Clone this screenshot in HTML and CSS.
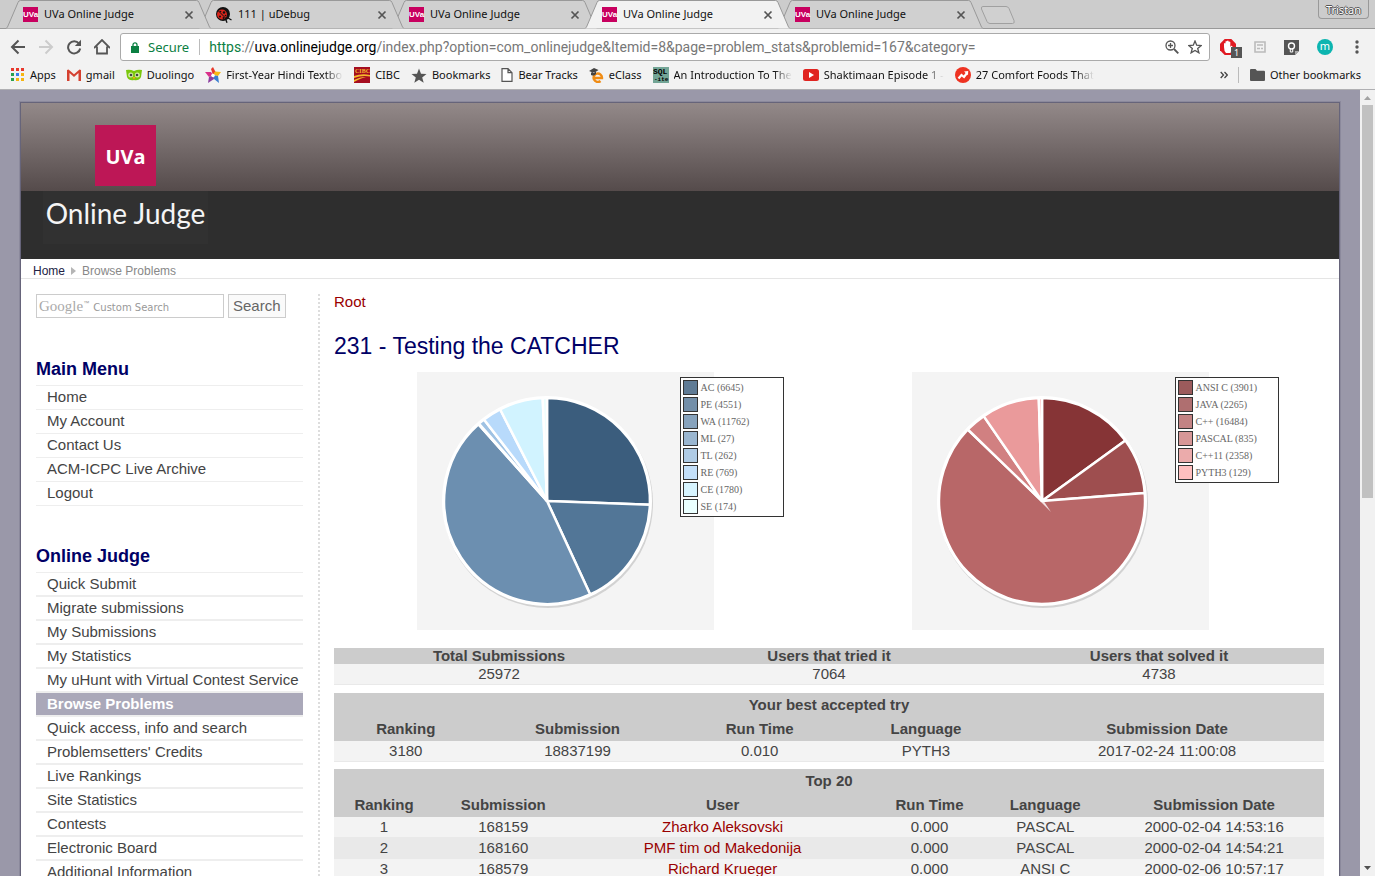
FILE: index.html
```html
<!DOCTYPE html>
<html lang="en">
<head>
<meta charset="utf-8">
<title>UVa Online Judge</title>
<link rel="stylesheet" href="styles.css">
</head>
<body>
<svg class="defs" aria-hidden="true">
  <symbol id="close" viewBox="0 0 10 10"><path d="M1.500 1.500l7 7M8.500 1.500l-7 7" stroke="#555" stroke-width="1.700" fill="none"/></symbol>
  <symbol id="shape" viewBox="0 0 205 29" preserveAspectRatio="none"><path d="M0 28.500L1.500 27L12 2.500Q12.600 .5 14.500 .5H190.500Q192.400 .5 193 2.500L203.500 27L205 28.500" stroke="#999" /></symbol>
</svg>

<header class="chrome">
  <div class="strip">
    <ul class="tabs">
      <li class="tab t1"><svg class="shape"><use href="#shape"/></svg><span class="fav">UVa</span><span class="name">UVa Online Judge</span><button class="x" aria-label="Close tab"><svg width="10" height="10"><use href="#close"/></svg></button></li>
      <li class="tab t2"><svg class="shape"><use href="#shape"/></svg><svg class="bug" width="16" height="16" viewBox="0 0 16 16"><circle cx="7" cy="7" r="7" fill="#111"/><circle cx="6" cy="7.500" r="5" fill="#d9261c"/><path d="M2.500 4l8 8" stroke="#111"/><path d="M12 11l3.500 2M10 13l1 2.800" stroke="#111" stroke-width="1.300"/><circle cx="8" cy="5.500" r="1.200" fill="#111"/><circle cx="4" cy="9.500" r="1" fill="#111"/><circle cx="7.500" cy="11" r=".9" fill="#111"/><circle cx="9.500" cy="8.500" r=".8" fill="#111"/><circle cx="4.500" cy="4.500" r=".8" fill="#111"/></svg><span class="name">111 | uDebug</span><button class="x" aria-label="Close tab"><svg width="10" height="10"><use href="#close"/></svg></button></li>
      <li class="tab t3"><svg class="shape"><use href="#shape"/></svg><span class="fav">UVa</span><span class="name">UVa Online Judge</span><button class="x" aria-label="Close tab"><svg width="10" height="10"><use href="#close"/></svg></button></li>
      <li class="tab active"><svg class="shape"><use href="#shape"/></svg><span class="fav">UVa</span><span class="name">UVa Online Judge</span><button class="x" aria-label="Close tab"><svg width="10" height="10"><use href="#close"/></svg></button></li>
      <li class="tab t5"><svg class="shape"><use href="#shape"/></svg><span class="fav">UVa</span><span class="name">UVa Online Judge</span><button class="x" aria-label="Close tab"><svg width="10" height="10"><use href="#close"/></svg></button></li>
    </ul>
    <button class="newtab" aria-label="New tab"><svg width="36" height="18" viewBox="0 0 36 18"><path d="M3 .5H26Q28 .5 29 2.500L34 14.500Q35 17.500 32.500 17.500H10Q8 17.500 7 15.500L1.500 3Q.8 .5 3 .5Z" fill="#d0d0d0" stroke="#a0a0a0"/></svg></button>
    <button class="user">Tristan</button>
  </div>

  <div class="toolbar">
    <div class="nav">
      <button aria-label="Back"><svg width="16" height="16" viewBox="0 0 16 16"><path d="M15 8H2M8.500 1.500L2 8l6.500 6.500" class="ln"/></svg></button>
      <button aria-label="Forward"><svg width="16" height="16" viewBox="0 0 16 16"><path d="M1 8H14M7.500 1.500L14 8l-6.500 6.500" class="ln off"/></svg></button>
      <button aria-label="Reload"><svg width="16" height="16" viewBox="0 0 16 16"><path d="M13 4.500A6.100 6.100 0 1 0 14.200 9.500" class="ln"/><path d="M15 .8V7H8.800Z" fill="#555"/></svg></button>
      <button aria-label="Home page"><svg width="16" height="16" viewBox="0 0 16 16"><path d="M0 9L8 1l8 8M3 7.500V14.500H13V7.500" fill="none" stroke="#555" stroke-width="1.800"/></svg></button>
    </div>
    <div class="omnibox">
      <svg width="8" height="11" viewBox="0 0 8 11"><path d="M0 4H8V11H0Z" fill="#0b8043"/><path d="M2 4.500V2.800a2 2 0 0 1 4 0V4.500" stroke="#0b8043" stroke-width="1.300" fill="none"/></svg>
      <span class="secure">Secure</span>
      <span class="url"><span class="g">https</span>://<b>uva.onlinejudge.org</b>/index.php?option=com_onlinejudge&amp;Itemid=8&amp;page=problem_stats&amp;problemid=167&amp;category=</span>
      <svg width="14" height="14" viewBox="0 0 14 14"><circle cx="5.500" cy="5.500" r="4.500" class="thin"/><path d="M9 9l4.300 4.300" stroke="#555" stroke-width="1.800"/><path d="M3 5.500H8M5.500 3V8" class="thin"/></svg>
      <svg width="14" height="14" viewBox="0 0 14 14"><path d="M7 1l1.700 4.200 4.500.3-3.500 2.900 1.200 4.400L7 10.400 3.100 12.800 4.300 8.400.8 5.500l4.500-.3Z" class="thin"/></svg>
    </div>
    <div class="ext">
      <span class="stop"><svg width="16" height="16" viewBox="0 0 16 16"><path d="M4.700 0H11.300L16 4.700V11.300L11.300 16H4.700L0 11.300V4.700Z" fill="#e01a22"/><path d="M4 8V4.500Q5 3.500 5.500 4.500V2.500Q6.500 1.500 7 2.500V2Q8 1 8.700 2V3Q9.600 2 10.300 3V8Q11.500 6 12.500 7.300L10.500 14H6Q4 12 4 8Z" fill="#fff"/></svg><i>1</i></span>
      <svg width="12" height="12" viewBox="0 0 12 12"><path d="M1 1H11V11H1Z M3 4H9 M3 7.500H6M7 7.500H9" stroke="#bbb" stroke-width="1.600" fill="none"/></svg>
      <svg width="15" height="15" viewBox="0 0 15 15"><path d="M0 0H15V11L11 15H0Z" fill="#555"/><path d="M11 15V11H15Z" fill="#aaa"/><circle cx="7.500" cy="6" r="3" fill="none" stroke="#fff" stroke-width="1.400"/><path d="M6.300 8.500V12H8.700V8.500" fill="none" stroke="#fff"/></svg>
      <span class="m">m</span>
      <svg width="4" height="14" viewBox="0 0 4 14" fill="#555"><circle cx="2" cy="2" r="1.700"/><circle cx="2" cy="7" r="1.700"/><circle cx="2" cy="12" r="1.700"/></svg>
    </div>
  </div>

  <nav class="marks">
    <a href="#"><svg width="14" height="14" viewBox="0 0 14 14"><path d="M0 0h3v3H0zM5 0h3v3H5zM10 0h3v3h-3z" fill="#e8382c"/><path d="M0 5h3v3H0z" fill="#2aa14f"/><path d="M5 5h3v3H5z" fill="#3b7ded"/><path d="M10 5h3v3h-3zM5 10h3v3H5zM10 10h3v3h-3z" fill="#f6b511"/><path d="M0 10h3v3H0z" fill="#2aa14f"/></svg><span>Apps</span></a>
    <a href="#"><svg width="14" height="12" viewBox="0 0 14 12"><path d="M0 1H14V12H0Z" fill="#f4f0ee"/><path d="M0 1V12H2.500V4L7 8l4.500-4V12H14V1L12.500 .5 7 5.200 1.500.5Z" fill="#d5402f"/></svg><span>gmail</span></a>
    <a href="#"><svg width="16" height="12" viewBox="0 0 16 12"><path d="M0 1Q4 0 8 2 12 0 16 1L15 8Q13 12 8 11 3 12 1 8Z" fill="#7ac70c"/><circle cx="4.700" cy="6" r="2.500" fill="#d5efa5"/><circle cx="11.300" cy="6" r="2.500" fill="#d5efa5"/><circle cx="5" cy="6" r="1.300" fill="#444"/><circle cx="11" cy="6" r="1.300" fill="#444"/><path d="M6.500 8H9.500L8 10.500Z" fill="#f9a51a"/></svg><span>Duolingo</span></a>
    <a href="#"><svg width="16" height="16" viewBox="0 0 16 16"><path d="M8 8L6 2 8 0 10.500 5Z" fill="#e8392b"/><path d="M8 8L10 4.500 16 5 13 9Z" fill="#f9b915"/><path d="M8 8L13 9 14 16 9 12Z" fill="#3c7fd0"/><path d="M8 8L9 12 3 16 4 10Z" fill="#8b3fa0"/><path d="M8 8L4 10 0 5 6 5Z" fill="#d9308a"/><circle cx="8" cy="8.500" r="1.800" fill="#fff"/></svg><span class="long">First-Year Hindi Textbo</span></a>
    <a href="#"><svg width="16" height="16" viewBox="0 0 16 16"><path d="M0 0H16V16H0Z" fill="#a50d20"/><path d="M0 9Q8 6 16 8V9.500Q8 8 0 11ZM0 13Q7 9.500 12 10Q7 11 0 15Z" fill="#f6b92b"/><text x="1" y="6" class="cibc">CIBC</text></svg><span>CIBC</span></a>
    <a href="#"><svg width="16" height="15" viewBox="0 0 16 15"><path d="M8 .5l2 5.200 5.500.3-4.300 3.500 1.500 5.300L8 11.800 3.300 14.800 4.800 9.500.5 6l5.500-.3Z" fill="#555"/></svg><span>Bookmarks</span></a>
    <a href="#"><svg width="12" height="14" viewBox="0 0 12 14"><path d="M1 .7H7L11 4.700V13.300H1ZM7 .7V4.700H11" fill="#fff" stroke="#555" stroke-width="1.200"/></svg><span>Bear Tracks</span></a>
    <a href="#"><svg width="15" height="15" viewBox="0 0 15 15"><path d="M5 10H13A4.200 4.200 0 1 0 11.500 13" stroke="#f08c14" stroke-width="2.400" fill="none"/><path d="M0 3L5 0 9.500 2 5 5ZM2 4.500V7Q5 8.500 7 6V4" fill="#444"/></svg><span>eClass</span></a>
    <a href="#"><svg width="16" height="16" viewBox="0 0 16 16"><path d="M0 0H16V16H0Z" fill="#73a596"/><text x="0" y="7" class="sql">SQL</text><text x="1" y="14" class="sql ite">-ite</text></svg><span class="long">An Introduction To The</span></a>
    <a href="#"><svg width="16" height="12" viewBox="0 0 16 12"><rect width="16" height="12" rx="2.500" fill="#e02420"/><path d="M6 3L11 6 6 9Z" fill="#fff"/></svg><span class="long">Shaktimaan Episode 1 -</span></a>
    <a href="#"><svg width="16" height="16" viewBox="0 0 16 16"><circle cx="8" cy="8" r="8" fill="#ee3322"/><path d="M3.500 11.500L6.500 8l2.500 2L12 6" stroke="#fff" stroke-width="2.200" fill="none"/><path d="M9 4.500L13.200 4 13 8.300Z" fill="#fff"/></svg><span class="long">27 Comfort Foods That</span></a>
    <div class="other">
      <button aria-label="More bookmarks"><svg width="8" height="8" viewBox="0 0 8 8"><path d="M.7 1L3.500 4 .7 7M4.500 1L7.300 4 4.500 7" stroke="#444" stroke-width="1.300" fill="none"/></svg></button>
      <a href="#"><svg width="15" height="12" viewBox="0 0 15 12"><path d="M1 0H5.500L7 1.800H14Q15 1.800 15 3V11Q15 12 14 12H1Q0 12 0 11V1Q0 0 1 0Z" fill="#555"/></svg><span>Other bookmarks</span></a>
    </div>
  </nav>
</header>

<div class="view">
  <div class="canvas">
    <div class="page">
      <div class="banner">
        <div class="brand"><span class="uva">UVa</span><span class="oj">Online Judge</span></div>
      </div>
      <nav class="crumbs"><a href="#">Home</a><svg width="5" height="8" viewBox="0 0 5 8"><path d="M0 0L5 4 0 8Z" fill="#b5b5b5"/></svg><span>Browse Problems</span></nav>
      <div class="cols">
        <aside class="side">
          <form class="search">
            <label class="field"><span class="hint"><b>Google</b><sup>™</sup> <em>Custom Search</em></span><input type="text" aria-label="Google Custom Search"></label>
            <button type="button">Search</button>
          </form>
          <h3>Main Menu</h3>
          <ul class="menu">
            <li><a href="#">Home</a></li><li><a href="#">My Account</a></li><li><a href="#">Contact Us</a></li><li><a href="#">ACM-ICPC Live Archive</a></li><li><a href="#">Logout</a></li>
          </ul>
          <h3>Online Judge</h3>
          <ul class="menu double">
            <li><a href="#">Quick Submit</a></li><li><a href="#">Migrate submissions</a></li><li><a href="#">My Submissions</a></li><li><a href="#">My Statistics</a></li><li><a href="#">My uHunt with Virtual Contest Service</a></li><li class="on"><a href="#">Browse Problems</a></li><li><a href="#">Quick access, info and search</a></li><li><a href="#">Problemsetters' Credits</a></li><li><a href="#">Live Rankings</a></li><li><a href="#">Site Statistics</a></li><li><a href="#">Contests</a></li><li><a href="#">Electronic Board</a></li><li><a href="#">Additional Information</a></li>
          </ul>
        </aside>
        <div class="dots"></div>
        <main class="main">
          <a class="red" href="#">Root</a>
          <h1>231 - Testing the CATCHER</h1>
          <div class="charts">
            <figure>
              <svg class="pie" width="297" height="258" viewBox="0 0 297 258">
                <circle cx="131" cy="131" r="105" fill="#d2d2d2"/><circle cx="130" cy="129" r="105" fill="#fff"/>
                <g stroke="#fff" stroke-width="2.500" stroke-linejoin="bevel">
                  <path fill="#3b5d7d" d="M130 129L130 26A103 103 0 0 1 232.900 132.800Z"/>
                  <path fill="#527697" d="M130 129L232.900 132.800A103 103 0 0 1 173.200 222.500Z"/>
                  <path fill="#6c8fb0" d="M130 129L173.200 222.500A103 103 0 0 1 61.400 52.200Z"/>
                  <path fill="#84a8c9" d="M130 129L61.400 52.200A103 103 0 0 1 61.900 51.700Z"/>
                  <path fill="#9fc2e3" d="M130 129L61.900 51.700A103 103 0 0 1 67 47.500Z"/>
                  <path fill="#b8dafb" d="M130 129L67 47.500A103 103 0 0 1 83.100 37.300Z"/>
                  <path fill="#d1f3ff" d="M130 129L83.100 37.300A103 103 0 0 1 125.700 26.100Z"/>
                  <path fill="#ebffff" d="M130 129L125.700 26.100A103 103 0 0 1 130 26Z"/>
                </g>
              </svg>
              <figcaption>
                <div><i class="b1"></i>AC (6645)</div><div><i class="b2"></i>PE (4551)</div><div><i class="b3"></i>WA (11762)</div><div><i class="b4"></i>ML (27)</div><div><i class="b5"></i>TL (262)</div><div><i class="b6"></i>RE (769)</div><div><i class="b7"></i>CE (1780)</div><div><i class="b8"></i>SE (174)</div>
              </figcaption>
            </figure>
            <figure>
              <svg class="pie" width="297" height="258" viewBox="0 0 297 258">
                <circle cx="131" cy="131" r="105" fill="#d2d2d2"/><circle cx="130" cy="129" r="105" fill="#fff"/>
                <g stroke="#fff" stroke-width="2.500" stroke-linejoin="bevel">
                  <path fill="#863436" d="M130 129L130 26A103 103 0 0 1 213.400 68.600Z"/>
                  <path fill="#9e4e4f" d="M130 129L213.400 68.600A103 103 0 0 1 232.700 120.900Z"/>
                  <path fill="#b86768" d="M130 129L232.700 120.900A103 103 0 1 1 55.800 57.500Z"/>
                  <path fill="#d18081" d="M130 129L55.800 57.500A103 103 0 0 1 71.700 44.100Z"/>
                  <path fill="#ea9a9b" d="M130 129L71.700 44.100A103 103 0 0 1 126.800 26.100Z"/>
                  <path fill="#ffb4b4" d="M130 129L126.800 26.100A103 103 0 0 1 130 26Z"/>
                </g>
                <path d="M129 130L131 128 139 140Z" fill="#fff" opacity=".8"/>
              </svg>
              <figcaption>
                <div><i class="r1"></i>ANSI C (3901)</div><div><i class="r2"></i>JAVA (2265)</div><div><i class="r3"></i>C++ (16484)</div><div><i class="r4"></i>PASCAL (835)</div><div><i class="r5"></i>C++11 (2358)</div><div><i class="r6"></i>PYTH3 (129)</div>
              </figcaption>
            </figure>
          </div>
          <table class="totals">
            <thead><tr><th>Total Submissions</th><th>Users that tried it</th><th>Users that solved it</th></tr></thead>
            <tbody><tr><td>25972</td><td>7064</td><td>4738</td></tr></tbody>
          </table>
          <table class="best">
            <colgroup><col class="w144"><col class="w200"><col class="w164"><col class="w168"><col></colgroup>
            <thead><tr><th colspan="5">Your best accepted try</th></tr>
            <tr><th>Ranking</th><th>Submission</th><th>Run Time</th><th>Language</th><th>Submission Date</th></tr></thead>
            <tbody><tr><td>3180</td><td>18837199</td><td>0.010</td><td>PYTH3</td><td>2017-02-24 11:00:08</td></tr></tbody>
          </table>
          <table class="top">
            <colgroup><col class="w100"><col class="w139"><col class="w300"><col class="w114"><col class="w117"><col></colgroup>
            <thead><tr><th colspan="6">Top 20</th></tr>
            <tr><th>Ranking</th><th>Submission</th><th>User</th><th>Run Time</th><th>Language</th><th>Submission Date</th></tr></thead>
            <tbody>
              <tr><td>1</td><td>168159</td><td><a class="red" href="#">Zharko Aleksovski</a></td><td>0.000</td><td>PASCAL</td><td>2000-02-04 14:53:16</td></tr>
              <tr><td>2</td><td>168160</td><td><a class="red" href="#">PMF tim od Makedonija</a></td><td>0.000</td><td>PASCAL</td><td>2000-02-04 14:54:21</td></tr>
              <tr><td>3</td><td>168579</td><td><a class="red" href="#">Richard Krueger</a></td><td>0.000</td><td>ANSI C</td><td>2000-02-06 10:57:17</td></tr>
            </tbody>
          </table>
        </main>
      </div>
    </div>
  </div>
  <div class="scroll"><svg width="7" height="4" viewBox="0 0 7 4"><path d="M0 4L3.500 0 7 4Z" fill="#a3a3a3"/></svg><div class="rail"><div class="thumb"></div></div><svg width="7" height="4" viewBox="0 0 7 4"><path d="M0 0L3.500 4 7 0Z" fill="#505050"/></svg></div>
</div>
</body>
</html>
```
FILE: styles.css
```css
* { box-sizing: border-box; }
body { margin: 0; height: 100vh; overflow: hidden; display: flex; flex-direction: column; font: 15px/18px "Liberation Sans", Arial, sans-serif; color: #444; background: #fff; }
ul { list-style: none; margin: 0; padding: 0; }
a { text-decoration: none; color: inherit; }
button { border: 0; padding: 0; background: none; font: inherit; color: inherit; }
svg { display: block; flex: none; }
.defs { position: absolute; width: 0; height: 0; }

/* browser frame */
.chrome { flex: none; font: 11px/16px "Noto Sans", sans-serif; color: #111; background: #f2f2f2; border-bottom: 1px solid #b0b0b3; }
.strip { display: flex; height: 29px; background: #ccc; padding-left: 6px; box-shadow: inset 0 -1px #999; }
.tabs { display: flex; min-width: 0; }
.tab { position: relative; display: flex; align-items: center; flex: 0 1 205px; width: 205px; padding: 0 17px; gap: 6px; }
.tab + .tab { margin-left: -12px; }
.tab > * { position: relative; }
.tab .shape { position: absolute; left: 0; top: 0; width: 100%; height: 29px; fill: #d0d0d0; }
.tab.active .shape { fill: #f2f2f2; }
.t1 { z-index: 4; } .t2 { z-index: 3; } .t3 { z-index: 2; } .active { z-index: 5; } .t5 { z-index: 1; }
.fav { width: 15px; height: 15px; background: #c8005f; color: #fff; font: bold 8px/15px "Liberation Sans", sans-serif; text-align: center; }
.name { flex: 1; padding-bottom: 2px; }
.newtab { margin: 0 0 0 -3px; }
.user { margin: 0 6px 0 auto; width: 51px; height: 19px; border: 1px solid #999; border-top: 0; border-radius: 0 0 4px 4px; color: #fff; text-shadow: 1px 0 #555, -1px 0 #555, 0 1px #555, 0 -1px #555; padding-top: 2px; }
.toolbar { display: flex; align-items: center; gap: 10px; height: 36px; padding: 0 16px 0 10px; }
.nav { display: flex; gap: 12px; }
.ln { fill: none; stroke: #555; stroke-width: 2; }
.off { stroke: #ccc; }
.thin { fill: none; stroke: #555; stroke-width: 1.3; }
.omnibox { flex: 1; min-width: 0; display: flex; align-items: center; gap: 9px; height: 28px; padding: 0 7px 0 10px; background: #fff; border: 1px solid #aaa; border-radius: 3px; font-size: 13px; line-height: 20px; }
.secure { color: #0b8043; border-right: 1px solid #bbb; padding-right: 10px; line-height: 16px; }
.url { flex: 1; color: #777; white-space: nowrap; overflow: hidden; font-family: Roboto, sans-serif; font-size: 14px; }
.url b { font-weight: normal; color: #000; }
.url .g { color: #0b8043; }
.ext { display: flex; align-items: center; gap: 18px; }
.stop { position: relative; }
.stop i { position: absolute; left: 11px; top: 8px; width: 11px; height: 11px; background: #555; color: #fff; font: 9px/11px "Noto Sans", sans-serif; text-align: center; }
.m { width: 16px; height: 16px; border-radius: 8px; background: #0cb5b0; color: #fff; line-height: 14px; text-align: center; margin-right: 4px; }
.marks { display: flex; align-items: center; gap: 11px; height: 24px; padding: 0 14px 4px 11px; white-space: nowrap; }
.marks a { display: flex; align-items: center; gap: 5px; }
.long { min-width: 117px; -webkit-mask-image: linear-gradient(to right, #000 85%, transparent); mask-image: linear-gradient(to right, #000 85%, transparent); }
.other { margin-left: auto; display: flex; gap: 10px; }
.other a { border-left: 1px solid #bbb; padding-left: 11px; }
.cibc { font: bold 6px "Liberation Serif", serif; fill: #f6b92b; }
.sql { font: bold 8px "Liberation Mono", monospace; fill: #000; }
.ite { font-size: 6px; }

/* scrolled page */
.view { flex: 1; min-height: 0; display: flex; }
.canvas { flex: 1; min-width: 0; overflow: hidden; background: #9a98a9; padding: 12px 20px 0; }
.page { background: #fff; border: 1px solid #66647a; box-shadow: 0 0 0 1px #8b899c; }
.banner { height: 156px; padding: 22px 0 0 22px; background: linear-gradient(#938989, #554b4b 88px, #2e2e2e 88px); }
.brand { width: 165px; display: flex; flex-direction: column; align-items: center; gap: 5px; }
.uva { width: 61px; height: 61px; background: #bd1756; color: #fff; font: bold 20px/63px "Open Sans", sans-serif; text-align: center; }
.oj { align-self: stretch; padding-bottom: 8px; text-align: center; background: #313131; color: #f5f5f5; font: 28px/45px Lato, "Liberation Sans", sans-serif; white-space: nowrap; }
.crumbs { display: flex; align-items: center; gap: 6px; height: 20px; padding: 5px 12px 0; border-bottom: 1px solid #e5e5e5; font-size: 12px; line-height: 14px; color: #888; }
.crumbs a { color: #224; }
.cols { display: flex; padding: 15px; }
.side { flex: none; width: 267px; }
.dots { flex: none; width: 2px; margin: 0 14px 0 15px; background: repeating-linear-gradient(#ddd 0 2px, #fff 2px 4px); }
.main { flex: 1; min-width: 0; }
.search { display: flex; gap: 4px; height: 24px; margin-bottom: 39px; }
.search button { border: 1px solid #ccc; background: #fafafa; color: #666; padding: 0 4px; }
.field { position: relative; width: 188px; }
.field input { width: 100%; height: 24px; border: 1px solid #ccc; background: none; position: relative; }
.hint { position: absolute; left: 3px; top: 3px; color: #999; white-space: nowrap; line-height: 18px; }
.hint b { font: 15px/18px "Liberation Serif", serif; color: #aaa; }
.hint sup { font-size: 6px; line-height: 6px; }
.hint em { font: 10px/18px "DejaVu Sans", sans-serif; }
h3 { margin: 0; font-size: 18px; line-height: 24px; color: #006; padding-bottom: 4px; }
.menu { border-top: 1px solid #eee; margin-bottom: 38px; }
.menu li { height: 24px; border-bottom: 1px solid #eee; padding-left: 11px; line-height: 22px; white-space: nowrap; }
.double li { border-bottom-width: 2px; }
.menu .on { background: #aaa8b9; background-clip: padding-box; color: #fff; font-weight: bold; }
.red { color: #900; }
h1 { margin: 22px 0 8px; font-size: 23px; line-height: 28px; font-weight: normal; color: #006; }
.main > .red { display: block; line-height: 16px; }
.charts { display: grid; grid-template-columns: 1fr 1fr; justify-items: center; padding: 4px 0 18px; }
figure { margin: 0; width: 330px; position: relative; }
.pie { background: #f4f4f4; }
figcaption { position: absolute; left: 263px; top: 5px; width: 104px; padding: 1px 2px; border: 1px solid #333; background: rgba(255, 255, 255, .85); font: 10px/17px "Liberation Serif", serif; color: #666; }
figcaption div { display: flex; align-items: center; gap: 3px; height: 17px; white-space: nowrap; }
figcaption i { width: 15px; height: 15px; border: 1px solid #333; }
.b1 { background: #5f7b95; } .b2 { background: #738fa9; } .b3 { background: #87a3bd; } .b4 { background: #9ab6d0; }
.b5 { background: #afcbe5; } .b6 { background: #c3dff9; } .b7 { background: #d7f4ff; } .b8 { background: #eaffff; }
.r1 { background: #9b5b5c; } .r2 { background: #af6f70; } .r3 { background: #c38384; } .r4 { background: #d79797; } .r5 { background: #ebabab; } .r6 { background: #ffbfbf; }
table { width: 100%; table-layout: fixed; border-collapse: collapse; text-align: center; }
th, td { padding: 0; }
td { padding-bottom: 2px; }
th { background: #ccc; height: 24px; }
tbody tr { background: #f3f3f3; height: 21px; box-shadow: inset 0 -1px #e9e9e9; }
tbody tr:nth-child(even) { background: #e9e9e9; }
.totals { margin-bottom: 8px; }
.totals th { height: 16px; line-height: 16px; }
.best { margin-bottom: 7px; }
.w144 { width: 14.5%; } .w200 { width: 20.2%; } .w164 { width: 16.6%; } .w168 { width: 17%; }
.w100 { width: 10.1%; } .w139 { width: 14%; } .w300 { width: 30.3%; } .w114 { width: 11.5%; } .w117 { width: 11.9%; }
.scroll { flex: none; width: 15px; background: #f1f1f1; display: flex; flex-direction: column; align-items: center; padding: 6px 0; }
.rail { flex: 1; width: 11px; padding: 5px 0; }
.thumb { height: 52%; background: #c1c1c1; }
```
